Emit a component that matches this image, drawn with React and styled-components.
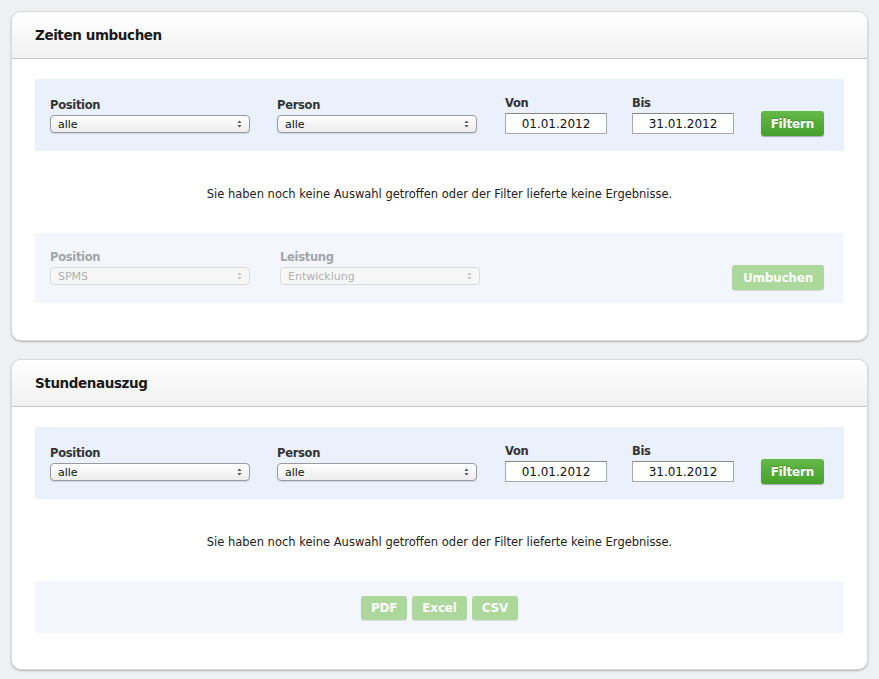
import styled, { createGlobalStyle } from "styled-components";

const GlobalStyle = createGlobalStyle`
  html, body {
    margin: 0;
    padding: 0;
    background: #eff0f2;
    font-family: "DejaVu Sans", "Liberation Sans", sans-serif;
  }
`;

const Page = styled.div`
  padding: 11px 11px 10px 11px;
  display: flex;
  flex-direction: column;
  gap: 18px;
`;

const Card = styled.section`
  background: #fff;
  border-radius: 10px;
  border: 1px solid #d9d9d9;
  box-shadow: 0 1px 2px rgba(0, 0, 0, 0.25);
  overflow: hidden;
  padding-bottom: ${(p) => p.$bottom || 36}px;
`;

const CardHeader = styled.header`
  height: 46px;
  display: flex;
  align-items: center;
  padding: 0 23px;
  background: linear-gradient(#ffffff, #f1f1f1);
  border-bottom: 1px solid #c9c9c9;
`;

const Title = styled.h2`
  margin: 0;
  font-size: 13.5px;
  letter-spacing: -0.4px;
  font-weight: bold;
  color: #1a1a1a;
`;

const Body = styled.div`
  padding: 20px 23px 0 23px;
`;

const FilterBox = styled.div`
  background: ${(p) => (p.$disabled ? "#f3f6fd" : "#eaf0fc")};
  height: ${(p) => p.$height || 72}px;
  box-sizing: border-box;
  display: flex;
  align-items: flex-end;
  padding: 0 20px ${(p) => p.$pb || 17}px 15px;
`;

const Field = styled.div`
  display: flex;
  flex-direction: column;
  gap: ${(p) => (p.$input ? 3 : 3)}px;
  margin-left: ${(p) => p.$ml || 0}px;
  margin-bottom: ${(p) => p.$mb || 0}px;
`;

const Label = styled.label`
  font-size: 11.5px;
  letter-spacing: -0.3px;
  font-weight: bold;
  color: ${(p) => (p.$disabled ? "#a4a4a4" : "#333")};
`;

const Select = styled.div`
  width: 200px;
  height: 18px;
  box-sizing: border-box;
  border: 1px solid ${(p) => (p.$disabled ? "#dadada" : "#9a9a9a")};
  border-radius: 4px;
  background: ${(p) => (p.$disabled ? "#f7f7f7" : "linear-gradient(#ffffff, #ececec)")};
  box-shadow: ${(p) => (p.$disabled ? "none" : "0 1px 1px rgba(0,0,0,0.12)")};
  display: flex;
  align-items: center;
  justify-content: space-between;
  padding: 0 7px 0 7px;
  font-size: 11px;
  color: ${(p) => (p.$disabled ? "#b0b0b0" : "#111")};
`;

const DateInput = styled.div`
  width: 102px;
  height: 21px;
  box-sizing: border-box;
  border: 1px solid #a9a9a9;
  border-top-color: #8a8a8a;
  background: #fff;
  font-size: 12px;
  color: #111;
  display: flex;
  align-items: center;
  justify-content: center;
`;

const Spacer = styled.div`
  flex: 1;
`;

const Button = styled.button`
  font-family: inherit;
  font-weight: bold;
  font-size: 12px;
  letter-spacing: -0.2px;
  color: #fff;
  border: none;
  border-radius: 3px;
  height: ${(p) => p.$h || 25}px;
  padding: 0 ${(p) => p.$px || 10}px;
  background: ${(p) =>
    p.$disabled ? "#acd89c" : "linear-gradient(#64b948, #47a02c)"};
  box-shadow: 0 1px 1px rgba(0, 0, 0, ${(p) => (p.$disabled ? 0.12 : 0.3)});
  text-shadow: ${(p) => (p.$disabled ? "none" : "0 -1px 0 rgba(0,0,0,0.2)")};
  margin-bottom: ${(p) => p.$mb || 0}px;
`;

const Message = styled.p`
  margin: 0;
  height: 82px;
  padding-top: 3px;
  box-sizing: border-box;
  display: flex;
  align-items: center;
  justify-content: center;
  font-size: 11.5px;
  color: #222;
`;

const ExportBar = styled.div`
  background: #f3f6fd;
  height: 52px;
  display: flex;
  align-items: center;
  justify-content: center;
  gap: 5px;
  padding-top: 2px;
  box-sizing: border-box;
`;

function Arrows({ disabled }) {
  const c = disabled ? "#c4c4c4" : "#555";
  return (
    <svg width="5" height="8" viewBox="0 0 5 8">
      <path d="M2.5 0.5 L4.6 3 L0.4 3 Z" fill={c} />
      <path d="M2.5 7.5 L4.6 5 L0.4 5 Z" fill={c} />
    </svg>
  );
}

function SelectField({ label, value, disabled, ml }) {
  return (
    <Field $ml={ml} $mb={1}>
      <Label $disabled={disabled}>{label}</Label>
      <Select $disabled={disabled}>
        <span>{value}</span>
        <Arrows disabled={disabled} />
      </Select>
    </Field>
  );
}

function DateField({ label, value, ml }) {
  return (
    <Field $input $ml={ml}>
      <Label>{label}</Label>
      <DateInput>{value}</DateInput>
    </Field>
  );
}

function Filter() {
  return (
    <FilterBox>
      <SelectField label="Position" value="alle" />
      <SelectField label="Person" value="alle" ml={27} />
      <DateField label="Von" value="01.01.2012" ml={28} />
      <DateField label="Bis" value="31.01.2012" ml={25} />
      <Spacer />
      <Button $px={10} $mb={-2}>Filtern</Button>
    </FilterBox>
  );
}

const msg =
  "Sie haben noch keine Auswahl getroffen oder der Filter lieferte keine Ergebnisse.";

export default function App() {
  return (
    <>
      <GlobalStyle />
      <Page>
        <Card $bottom={37}>
          <CardHeader>
            <Title>Zeiten umbuchen</Title>
          </CardHeader>
          <Body>
            <Filter />
            <Message>{msg}</Message>
            <FilterBox $disabled $height={70} $pb={17}>
              <SelectField label="Position" value="SPMS" disabled />
              <SelectField label="Leistung" value="Entwicklung" disabled ml={30} />
              <Spacer />
              <Button $disabled $px={11} $mb={-4}>
                Umbuchen
              </Button>
            </FilterBox>
          </Body>
        </Card>
        <Card $bottom={36}>
          <CardHeader>
            <Title>Stundenauszug</Title>
          </CardHeader>
          <Body>
            <Filter />
            <Message>{msg}</Message>
            <ExportBar>
              <Button $disabled $h={24} $px={10}>PDF</Button>
              <Button $disabled $h={24} $px={10}>Excel</Button>
              <Button $disabled $h={24} $px={10}>CSV</Button>
            </ExportBar>
          </Body>
        </Card>
      </Page>
    </>
  );
}
